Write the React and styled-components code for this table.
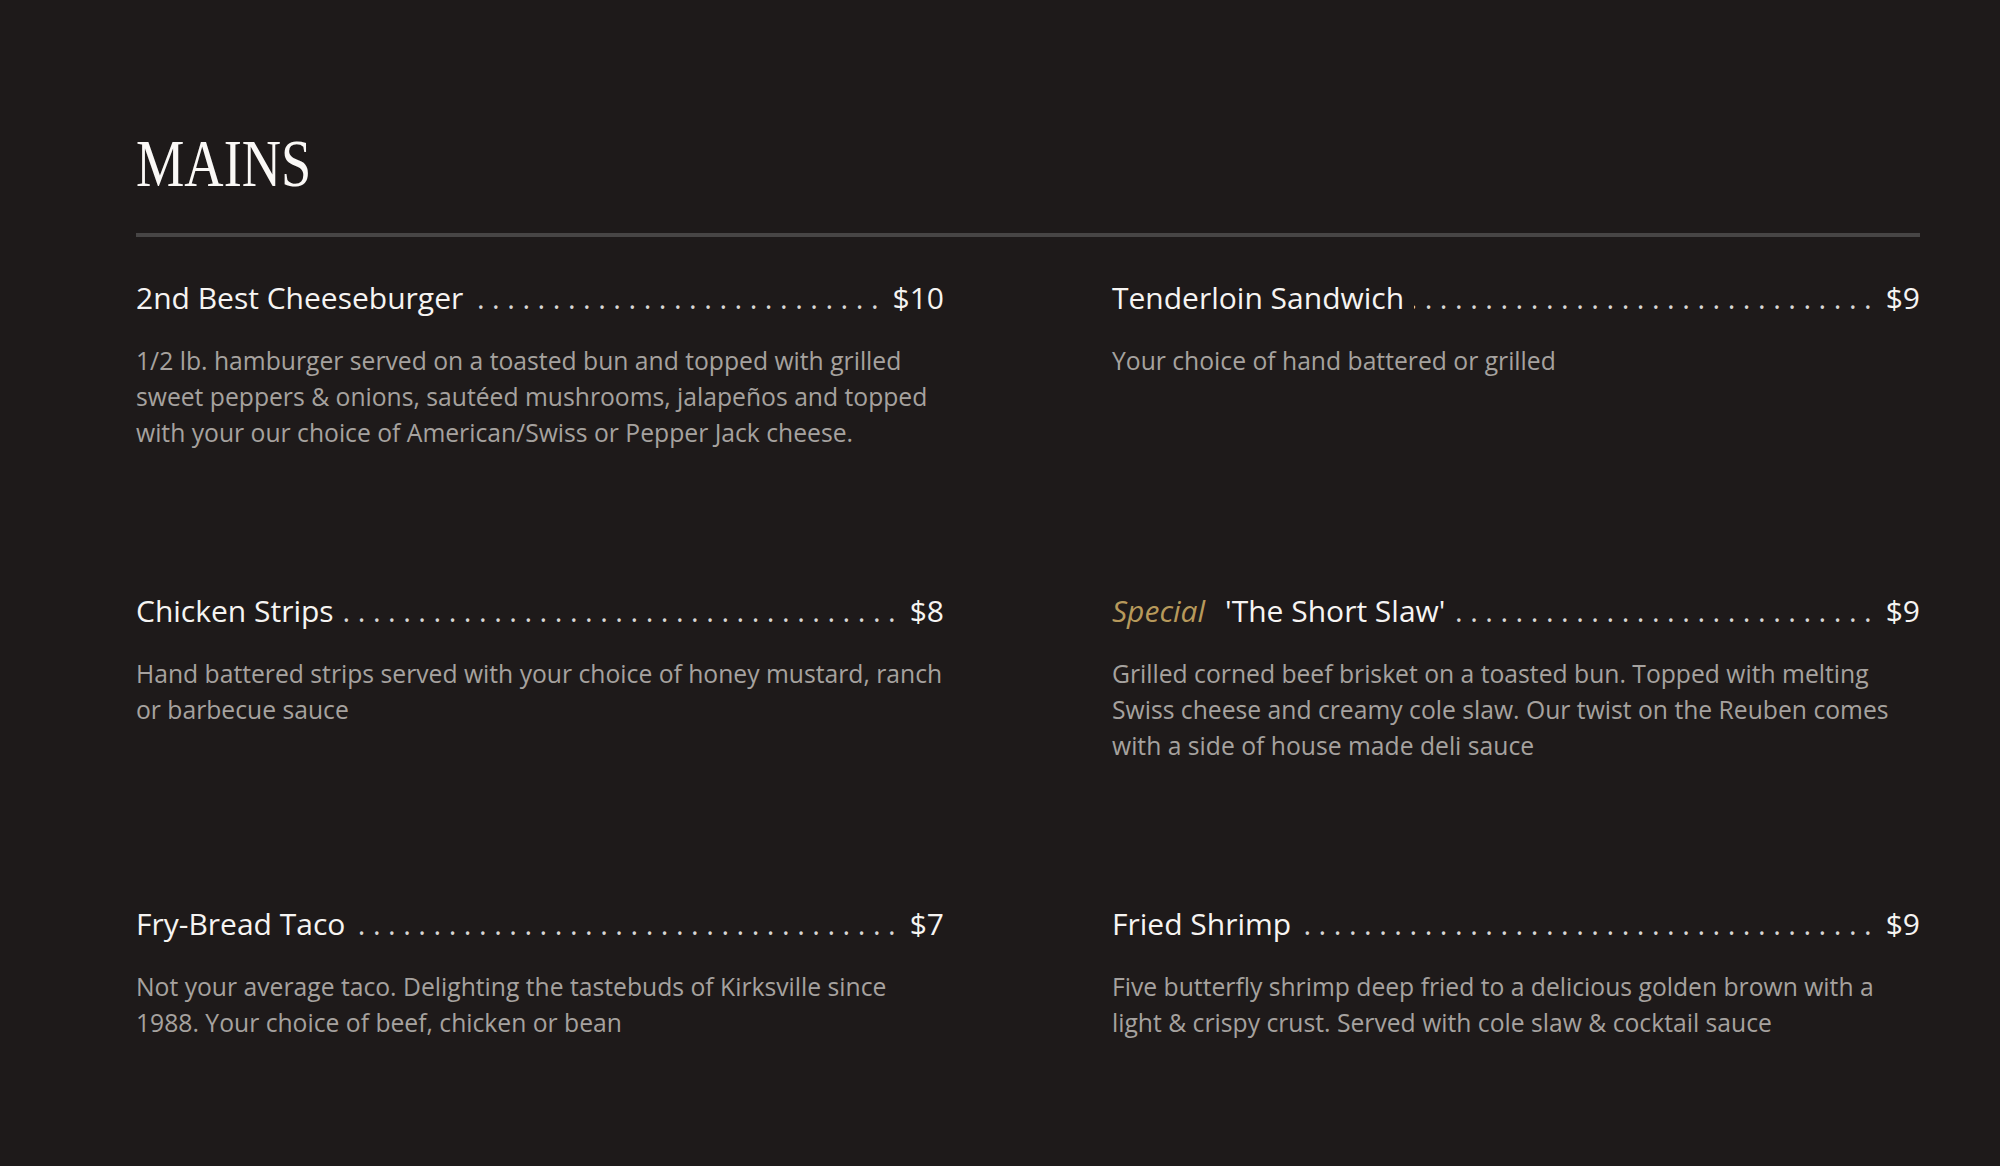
import React from 'react';
import styled, { createGlobalStyle } from 'styled-components';

const GlobalStyle = createGlobalStyle`
  body {
    margin: 0;
    background: #1e1a1a;
    font-family: "Open Sans", "Noto Sans", sans-serif;
  }
`;

const Page = styled.section`
  width: 1784px;
  padding: 123px 80px 120px 136px;
`;

const Heading = styled.h1`
  margin: 0;
  font-family: "Liberation Serif", "DejaVu Serif", serif;
  font-weight: 400;
  font-size: 68px;
  line-height: 80px;
  color: #faf8f6;
  transform: scaleX(0.8);
  transform-origin: left center;
`;

const Divider = styled.hr`
  margin: 30px 0 41px;
  height: 4px;
  border: none;
  background: #474545;
`;

const Grid = styled.div`
  display: grid;
  grid-template-columns: 808px 808px;
  column-gap: 168px;
  row-gap: 140px;
  align-items: start;
`;

const Item = styled.article`
  display: flex;
  flex-direction: column;
`;

const TitleRow = styled.div`
  display: flex;
  align-items: baseline;
  height: 40px;
  font-size: 30px;
  line-height: 40px;
  color: #f6f4f2;
`;

const Name = styled.span`
  white-space: nowrap;
`;

const Tag = styled.span`
  font-style: italic;
  color: #b7995b;
  margin-right: 20px;
`;

// dots are right-aligned so the gap before the price stays constant
const Leader = styled.span`
  flex: 1;
  display: flex;
  justify-content: flex-end;
  overflow: hidden;
  white-space: nowrap;
  margin: 0 14px 0 10px;
  color: #d8d6d4;
  font-size: 29px;
`;

const Price = styled.span`
  white-space: nowrap;
`;

const Description = styled.p`
  margin: 25px 0 0;
  font-size: 24.7px;
  line-height: 36px;
  color: #a6a29f;
`;

const dots = '. '.repeat(80) + '.';

const items = [
  {
    name: '2nd Best Cheeseburger',
    price: '$10',
    text: '1/2 lb. hamburger served on a toasted bun and topped with grilled sweet peppers & onions, sautéed mushrooms, jalapeños and topped with your our choice of American/Swiss or Pepper Jack cheese.',
  },
  {
    name: 'Tenderloin Sandwich',
    price: '$9',
    text: 'Your choice of hand battered or grilled',
  },
  {
    name: 'Chicken Strips',
    price: '$8',
    text: 'Hand battered strips served with your choice of honey mustard, ranch or barbecue sauce',
  },
  {
    tag: 'Special',
    name: "'The Short Slaw'",
    price: '$9',
    text: 'Grilled corned beef brisket on a toasted bun. Topped with melting Swiss cheese and creamy cole slaw. Our twist on the Reuben comes with a side of house made deli sauce',
  },
  {
    name: 'Fry-Bread Taco',
    price: '$7',
    text: 'Not your average taco. Delighting the tastebuds of Kirksville since 1988. Your choice of beef, chicken or bean',
  },
  {
    name: 'Fried Shrimp',
    price: '$9',
    text: 'Five butterfly shrimp deep fried to a delicious golden brown with a light & crispy crust. Served with cole slaw & cocktail sauce',
  },
];

const App = () => {
  return (
    <>
      <GlobalStyle />
      <Page>
        <Heading>MAINS</Heading>
        <Divider />
        <Grid>
          {items.map((item) => (
            <Item key={item.name}>
              <TitleRow>
                {item.tag && <Tag>{item.tag}</Tag>}
                <Name>{item.name}</Name>
                <Leader>
                  <span>{dots}</span>
                </Leader>
                <Price>{item.price}</Price>
              </TitleRow>
              <Description>{item.text}</Description>
            </Item>
          ))}
        </Grid>
      </Page>
    </>
  );
};

export default App;
